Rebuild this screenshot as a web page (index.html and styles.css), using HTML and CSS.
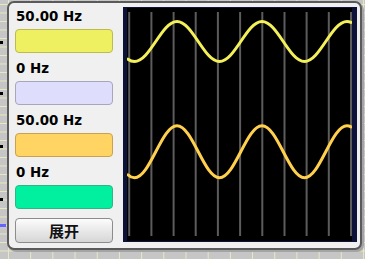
FILE: index.html
```html
<!DOCTYPE html>
<html>
<head>
<meta charset="utf-8">
<link rel="stylesheet" href="styles.css">
</head>
<body>
<div class="canvas">
  <span class="pin pin-1"></span>
  <span class="pin pin-2"></span>
  <span class="pin pin-3"></span>
  <span class="pin pin-4"></span>
  <span class="wire"></span>
</div>
<div class="panel">
  <div class="controls">
    <div class="channel">
      <div class="freq">50.00 Hz</div>
      <div class="swatch swatch-yellow"></div>
    </div>
    <div class="channel">
      <div class="freq">0 Hz</div>
      <div class="swatch swatch-lavender"></div>
    </div>
    <div class="channel">
      <div class="freq">50.00 Hz</div>
      <div class="swatch swatch-orange"></div>
    </div>
    <div class="channel">
      <div class="freq">0 Hz</div>
      <div class="swatch swatch-green"></div>
    </div>
    <button class="expand">展开</button>
  </div>
  <div class="scope">
    <svg width="225" height="233" viewBox="0 0 225 233">
      <g class="grid">
        <line x1="2.2" y1="4" x2="2.2" y2="228"/>
        <line x1="24.4" y1="4" x2="24.4" y2="228"/>
        <line x1="46.6" y1="4" x2="46.6" y2="228"/>
        <line x1="68.7" y1="4" x2="68.7" y2="228"/>
        <line x1="90.9" y1="4" x2="90.9" y2="228"/>
        <line x1="113.1" y1="4" x2="113.1" y2="228"/>
        <line x1="135.3" y1="4" x2="135.3" y2="228"/>
        <line x1="157.5" y1="4" x2="157.5" y2="228"/>
        <line x1="179.6" y1="4" x2="179.6" y2="228"/>
        <line x1="201.8" y1="4" x2="201.8" y2="228"/>
        <line x1="224" y1="4" x2="224" y2="228"/>
      </g>
      <path class="wave wave-yellow" d="M1 51.2 Q4.2 53.5 7.5 53.5 C23 53.5 34.5 13.5 50 13.5 C65.5 13.5 77 53.5 92.5 53.5 C108 53.5 119.5 13.5 135 13.5 C150.5 13.5 162 53.5 177.5 53.5 C193 53.5 204.5 13.5 220 13.5 Q222 13.5 224 14.4"/>
      <path class="wave wave-orange" d="M1 166.8 Q4.2 169.75 7.5 169.75 C23 169.75 34.5 117.75 50 117.75 C65.5 117.75 77 169.75 92.5 169.75 C108 169.75 119.5 117.75 135 117.75 C150.5 117.75 162 169.75 177.5 169.75 C193 169.75 204.5 117.75 220 117.75 Q222 117.75 224 118.85"/>
    </svg>
  </div>
</div>
</body>
</html>
```
FILE: styles.css
```css
html, body {
  margin: 0;
  padding: 0;
}
body {
  width: 365px;
  height: 259px;
  overflow: hidden;
  position: relative;
  background-color: #c6c6c6;
  background-image:
    linear-gradient(to bottom, #e9e8c2 1px, transparent 1px),
    linear-gradient(to right, #e9e8c2 1px, transparent 1px);
  background-size: 100% 8.5px, 22.2px 100%;
  background-position: 0 4px, 8px 0;
}
.canvas {
  position: absolute;
  left: 0;
  top: 0;
  width: 7px;
  height: 259px;
}
.pin {
  position: absolute;
  left: 0;
  width: 3px;
  height: 3px;
  background: #000;
}
.pin-1 { top: 41px; }
.pin-2 { top: 92px; }
.pin-3 { top: 145px; }
.pin-4 { top: 198px; }
.wire {
  position: absolute;
  left: 0;
  top: 224px;
  width: 6px;
  height: 3px;
  background: #6464ff;
}
.panel {
  position: relative;
  margin: 1px 0 0 7px;
  width: 355px;
  height: 249px;
  box-sizing: border-box;
  border: 2px solid #5a5a5a;
  border-radius: 7px;
  background: #f0f0f0;
  box-shadow: 2px 2px 0 #a4a4a4;
  display: flex;
  align-items: flex-start;
  padding: 4px 3px 0 6px;
}
.controls {
  width: 98px;
  padding-top: 2px;
  display: flex;
  flex-direction: column;
}
.channel {
  display: flex;
  flex-direction: column;
}
.channel + .channel {
  margin-top: 8px;
}
.freq {
  font: 700 13.4px/15px "DejaVu Sans", sans-serif;
  color: #000;
  padding-left: 1px;
  margin-bottom: 5px;
  white-space: nowrap;
}
.swatch {
  height: 24px;
  box-sizing: border-box;
  border: 1px solid;
  border-radius: 4px;
}
.swatch-yellow { background: #eef062; border-color: #bcbc4c; }
.swatch-lavender { background: #dedefc; border-color: #a6a6bc; }
.swatch-orange { background: #ffd462; border-color: #c8a24e; }
.swatch-green { background: #00f0a0; border-color: #2eb684; }
.expand {
  margin-top: 9px;
  height: 25px;
  box-sizing: border-box;
  border: 1px solid #8c8c8c;
  border-radius: 4px;
  background: linear-gradient(to bottom, #fcfcfc, #d6d6d6);
  font: 700 15px/21px "Noto Sans CJK SC", sans-serif;
  color: #111;
  padding: 0;
}
.scope {
  margin-left: 10px;
  width: 234px;
  height: 235px;
  box-sizing: border-box;
  border-style: solid;
  border-width: 1px 5px 1px 4px;
  border-color: #0c1238;
  background: #000;
}
.scope svg {
  display: block;
}
.grid line {
  stroke: #5c5c5c;
  stroke-width: 2;
}
.wave {
  fill: none;
  stroke-width: 3;
  stroke-linecap: round;
}
.wave-yellow { stroke: #f4f05a; }
.wave-orange { stroke: #ffd04e; }
```
